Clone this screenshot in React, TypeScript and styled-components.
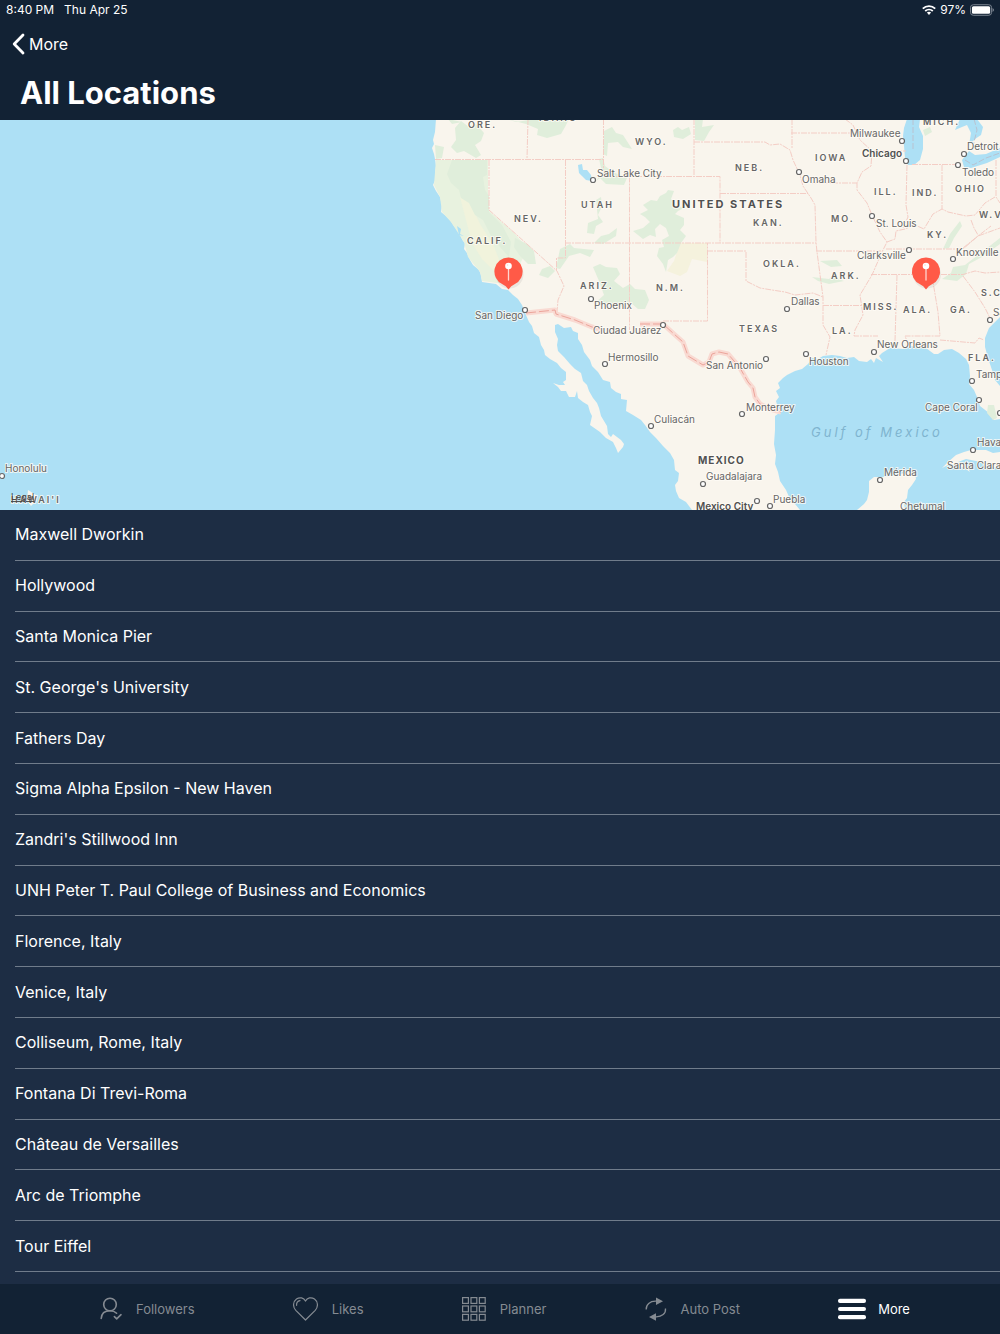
import React from "react";
import styled, { createGlobalStyle } from "styled-components";

const GlobalStyle = createGlobalStyle`
  * { box-sizing: border-box; }
  body {
    margin: 0;
    background: #1d2d44;
    color: #fff;
    font-family: Inter, "Liberation Sans", sans-serif;
  }
  button {
    margin: 0;
    padding: 0;
    border: 0;
    background: none;
    color: inherit;
    font: inherit;
    cursor: pointer;
  }
`;

const Page = styled.div`
  min-height: 100vh;
  display: flex;
  flex-direction: column;
`;

const Header = styled.header`
  background: #122234;
`;

const StatusBar = styled.div`
  height: 20px;
  padding: 0 6px;
  display: flex;
  align-items: center;
  justify-content: space-between;
  font-size: 12px;
  line-height: 20px;
`;

const StatusGroup = styled.div<{ $gap: number }>`
  display: flex;
  align-items: center;
  gap: ${(p) => p.$gap}px;
`;

const NavRow = styled.nav`
  height: 48px;
  padding: 0 12px;
  display: flex;
  align-items: center;
`;

const BackButton = styled.button`
  display: flex;
  align-items: center;
  gap: 4px;
  font-size: 16px;
  line-height: 24px;
`;

const Title = styled.h1`
  margin: 0;
  padding: 5px 20px 7px;
  font-size: 31px;
  line-height: 40px;
  font-weight: 700;
`;

const MapSection = styled.section`
  flex: none;
  height: 390px;
  background: #ade0f5;
`;

const MapSvg = styled.svg`
  display: block;
  width: 100%;
  height: 100%;
`;

type Kind = "city" | "capital" | "state" | "country" | "nation" | "sea";

const labelStyles: Record<Kind, { size: number; weight: number; space: number; color: string }> = {
  city: { size: 10, weight: 400, space: 0, color: "#666" },
  capital: { size: 10, weight: 600, space: 0, color: "#505050" },
  state: { size: 9, weight: 600, space: 2, color: "#666" },
  nation: { size: 10, weight: 700, space: 1, color: "#505050" },
  country: { size: 11, weight: 700, space: 2, color: "#505050" },
  sea: { size: 13, weight: 400, space: 3, color: "#7fb4cf" },
};

const MapLabel = styled.text<{ $kind: Kind }>`
  font-size: ${(p) => labelStyles[p.$kind].size}px;
  font-weight: ${(p) => labelStyles[p.$kind].weight};
  letter-spacing: ${(p) => labelStyles[p.$kind].space}px;
  font-style: ${(p) => (p.$kind === "sea" ? "italic" : "normal")};
  fill: ${(p) => labelStyles[p.$kind].color};
  stroke: ${(p) => (p.$kind === "sea" ? "none" : "rgba(255, 252, 246, 0.8)")};
  stroke-width: 2px;
  stroke-linejoin: round;
  paint-order: stroke;
`;

const LegalLabel = styled.text`
  font-size: 9px;
  fill: #444;
  text-decoration: underline;
`;

const List = styled.ul`
  flex: 1;
  margin: 0;
  padding: 0 0 12px 15px;
  list-style: none;
  display: flex;
  flex-direction: column;
  background: #1d2d44;
`;

const Row = styled.li`
  flex: 1;
  min-height: 44px;
  display: flex;
  border-bottom: 1px solid #707c8b;
`;

const RowButton = styled.button`
  flex: 1;
  padding-bottom: 1px;
  text-align: left;
  font-size: 16px;
  line-height: 24px;
`;

const TabBar = styled.nav`
  height: 50px;
  flex: none;
  padding: 0 9% 0 10%;
  display: flex;
  align-items: center;
  justify-content: space-between;
  background: #122234;
`;

const Tab = styled.button<{ $active?: boolean }>`
  height: 50px;
  display: flex;
  align-items: center;
  gap: ${(p) => (p.$active ? 12 : 14)}px;
  font-size: 13px;
  line-height: 20px;
  color: ${(p) => (p.$active ? "#fff" : "#858b92")};
`;

const places = [
  "Maxwell Dworkin",
  "Hollywood",
  "Santa Monica Pier",
  "St. George's University",
  "Fathers Day",
  "Sigma Alpha Epsilon - New Haven",
  "Zandri's Stillwood Inn",
  "UNH Peter T. Paul College of Business and Economics",
  "Florence, Italy",
  "Venice, Italy",
  "Colliseum, Rome, Italy",
  "Fontana Di Trevi-Roma",
  "Château de Versailles",
  "Arc de Triomphe",
  "Tour Eiffel",
];

const labels: [string, number, number, Kind][] = [
  ["ORE.", 468, 128, "state"],
  ["IDAHO", 539, 121, "state"],
  ["WYO.", 635, 145, "state"],
  ["NEB.", 735, 171, "state"],
  ["IOWA", 815, 161, "state"],
  ["MICH.", 923, 125, "state"],
  ["ILL.", 874, 195, "state"],
  ["IND.", 912, 196, "state"],
  ["OHIO", 955, 192, "state"],
  ["W.VA.", 979, 218, "state"],
  ["UTAH", 581, 208, "state"],
  ["NEV.", 514, 222, "state"],
  ["CALIF.", 467, 244, "state"],
  ["KAN.", 753, 226, "state"],
  ["MO.", 831, 222, "state"],
  ["KY.", 927, 238, "state"],
  ["OKLA.", 763, 267, "state"],
  ["ARK.", 831, 279, "state"],
  ["ARIZ.", 580, 289, "state"],
  ["N.M.", 656, 291, "state"],
  ["MISS.", 863, 310, "state"],
  ["ALA.", 903, 313, "state"],
  ["GA.", 950, 313, "state"],
  ["S.C.", 981, 296, "state"],
  ["TEXAS", 739, 332, "state"],
  ["LA.", 832, 334, "state"],
  ["FLA.", 968, 361, "state"],
  ["HAWAI'I", 11, 503, "state"],
  ["UNITED STATES", 672, 208, "country"],
  ["MEXICO", 698, 464, "nation"],
  ["Gulf of Mexico", 811, 437, "sea"],
  ["Chicago", 862, 157, "capital"],
  ["Mexico City", 696, 510, "capital"],
  ["Milwaukee", 850, 137, "city"],
  ["Detroit", 967, 150, "city"],
  ["Toledo", 962, 176, "city"],
  ["Omaha", 802, 183, "city"],
  ["Salt Lake City", 597, 177, "city"],
  ["St. Louis", 876, 227, "city"],
  ["Clarksville", 857, 259, "city"],
  ["Knoxville", 956, 256, "city"],
  ["Phoenix", 594, 309, "city"],
  ["Dallas", 791, 305, "city"],
  ["San Diego", 475, 319, "city"],
  ["Ciudad Juárez", 593, 334, "city"],
  ["Hermosillo", 608, 361, "city"],
  ["San Antonio", 706, 369, "city"],
  ["Houston", 809, 365, "city"],
  ["New Orleans", 877, 348, "city"],
  ["Savannah", 993, 316, "city"],
  ["Tampa", 976, 378, "city"],
  ["Cape Coral", 925, 411, "city"],
  ["Monterrey", 746, 411, "city"],
  ["Culiacán", 654, 423, "city"],
  ["Guadalajara", 706, 480, "city"],
  ["Puebla", 773, 503, "city"],
  ["Mérida", 884, 476, "city"],
  ["Chetumal", 900, 510, "city"],
  ["Havana", 977, 446, "city"],
  ["Santa Clara", 947, 469, "city"],
  ["Honolulu", 5, 472, "city"],
];

const dots: [number, number][] = [
  [902, 141], [906, 161], [964, 154], [958, 165], [799, 172], [593, 180], [872, 216],
  [909, 250], [953, 259], [591, 299], [787, 309], [525, 310], [663, 325], [605, 364],
  [766, 359], [806, 354], [874, 352], [990, 320], [972, 381], [979, 400], [742, 414],
  [651, 426], [703, 484], [757, 501], [770, 506], [880, 480], [973, 450], [2, 476], [1000, 413],
];

const land =
  "M436 119L435 132L433 140L434 144L432 148L434 154L435 159L436 166L435 174L436 178L433 185L436 191L440 197L442 205L441 212L446 216L450 220L454 226L457 229L459 226L460 232L464 235L461 237L463 241L465 243L464 249L467 253L470 260L473 265L479 270L481 275L482 282L489 283L496 284L502 289L508 290L513 295L518 299L522 305L524 310L526 315L529 322L532 326L534 333L539 337L541 345L544 350L545 355L550 359L557 363L561 368L566 372L566 380L563 382L565 385L559 385L553 383L558 387L561 391L566 391L569 397L575 397L577 391L578 398L583 402L588 405L590 412L592 416L590 425L600 432L606 438L613 442L616 448L618 453L623 447L624 444L621 440L613 434L611 437L608 434L607 426L604 421L601 416L599 408L597 403L593 398L589 391L587 385L583 381L581 373L575 369L570 364L564 357L558 351L557 345L558 339L555 332L555 325L558 324L564 328L571 327L573 331L578 333L578 339L582 345L584 352L590 360L592 366L598 372L603 380L610 382L611 388L616 392L621 394L621 399L627 400L626 411L633 415L641 420L645 425L650 432L656 438L663 446L670 453L674 460L675 470L679 473L678 481L675 485L676 491L679 498L686 502L692 510L800 510L795 504L790 499L786 490L780 481L778 472L775 464L776 455L774 444L775 430L775 416L782 411L778 408L776 401L779 397L776 391L780 388L778 383L783 378L787 375L795 371L802 369L808 364L812 358L818 359L823 356L832 355L840 356L847 358L854 357L859 361L867 362L871 359L874 363L876 358L883 362L879 356L882 353L890 348L903 349L911 346L920 348L926 348L934 354L938 354L944 350L952 349L959 353L966 359L969 365L970 376L969 384L974 390L977 397L980 406L989 413L994 420L1000 419V386L995 380L992 370L988 358L985 347L985 338L989 328L1000 317V119Z";

const greens = [
  "M455 128L461 121L469 127L476 124L484 133L481 141L475 145L481 155L476 158L464 151L457 153L451 147L456 140Z",
  "M507 119L516 122L535 119L546 121L569 119L565 127L561 134L547 138L537 135L538 129L526 124Z",
  "M452 160L487 160V175L483 177L485 190L489 196V212L502 225L511 242L509 257L500 247L491 236L483 220L475 215L469 203L461 198L459 190L451 183L447 174Z",
  "M448 119L462 122L452 124ZM435 145L444 147L442 158L436 159Z",
  "M515 238L527 244L534 251L536 264L528 264L520 256L514 247ZM542 269L550 266L555 271L548 278L539 275Z",
  "M604 131L612 127L616 133L623 135L632 149L623 147L618 142L608 143L607 156L603 154ZM599 159L603 158L605 166L613 172L627 178L624 185L606 184L600 178L596 181L602 172Z",
  "M673 130L678 127L682 130L689 127L691 134L683 139L674 137ZM695 119H703L702 127L714 125L709 132L704 141L695 140Z",
  "M643 205L651 200L657 201L660 196L666 193L668 190L674 191L671 199L676 205L684 208L678 211L675 214L684 218L684 225L680 230L686 236L681 243L677 253L673 257L668 260L666 272L663 264L657 256L659 248L664 247L662 240L669 236L666 228L660 224L655 229L656 237L650 235L643 239L633 231L643 228L650 222L645 217L640 214L648 210Z",
  "M560 249L570 244L574 248L594 250L590 257L580 253L569 256L560 269L556 268ZM594 243L601 236L609 234L617 228L616 236L603 244ZM596 200L601 197L602 206L598 215L603 222L596 226L594 234L587 233L588 223L598 219Z",
  "M593 267L600 264L606 267L617 268L620 274L614 281L623 288L630 284L635 289L645 290L649 300L645 309L638 309L630 302L620 307L607 303L595 303L604 295L599 281Z",
  "M820 261L837 260L842 266L831 267ZM812 277L829 279L835 273L836 278L844 281L829 284L818 281Z",
  "M942 279L951 273L953 267L965 265L982 252L1000 238V244L982 257L969 264L966 274L957 281ZM943 249L950 234L960 221L962 226L954 238L949 248Z",
  "M988 405H994L997 418L993 420L987 413ZM923 130L930 127L932 132L925 136Z",
];

const borders =
  "M435 159.5H603.500M528 119L527 159M489 160V210L557 271L564 286L558 300L557 312M565.500 160V258H556.500V271M603.500 119V176.500H720V243M694 119V176.500M629.500 176.500V330M565 243H816M720 193.500H808M694 142H765L770 145L780 144L790 150L793 160L800 175L803 186L811 198L815 205L816 242L817 252L823 297V325L830 337L826 355M792 119V149M791 133H859M663 321H707.500V243M707 251H746V281L760 288L772 290L785 292L795 295L813 293L823 297M845 119L853 125L860 140L872 151L871 166L862 172L857 183V190L867 203L872 215L880 232L887 242L882 252L872 275L860 295L863 315L855 330L854 336H878M873 151H906M812 183H857M816 251H881M823 305.500H861M886 249H963L978 236L991 226M871 274.500H963L975 271L985 273L1000 272M897 275L895 341M932 276L938 312L940 336H905L907 341M940 340L975 343L979 338L984 340M963 276L975 292L985 308L990 318M887 242L895 239L896 231L905 229L915 225L924 229L933 214L942 209L948 212L966 216L975 215L985 203L995 197M907 165L906 205L908 217L903 228M942 165V209M912 164.500H958M996 160V197L1000 203M971 220L974 228L978 235M963 248L978 236L1000 228";

const frontier =
  "M526 313L555 310L556 314L575 320L592 327L600 329M640 324H663L674 334L683 342L688 356L703 365L709 362L712 354L719 352L728 354L740 368L748 382L753 388L755 397L760 404L770 409L781 412";

function Pin({ x, y }: { x: number; y: number }) {
  return (
    <g transform={`translate(${x} ${y})`}>
      <ellipse cx="1" cy="3" rx="14" ry="14" fill="#000" opacity="0.06" />
      <path d="M0 -14A14 14 0 0 1 6 12.700Q2.500 14 0 18Q-2.500 14 -6 12.700A14 14 0 0 1 0 -14Z" fill="#ff5a47" />
      <path d="M0 -4V8.500" stroke="#ffd6d0" strokeWidth="1.300" strokeLinecap="round" />
      <circle cy="-5.500" r="3.300" fill="#fff" />
      <circle cx="-1" cy="-6.500" r="0.800" fill="#ffd6d0" />
    </g>
  );
}

function LocationMap() {
  return (
    <MapSvg viewBox="0 120 1000 390" preserveAspectRatio="xMidYMid slice" role="img" aria-label="Map of locations">
      <g fill="#f9f5ed">
        <path d={land} />
        <path d="M857 510L864 504L867 500L869 492L869 481L874 477L882 477L897 475L908 472L915 473L916 479L912 485L908 490L907 498L904 502L905 510Z" />
        <path d="M942 468L948 462L956 455L964 452L971 450L986 450L993 453L1000 452V468L985 466L981 462L966 459L958 462L967 466L970 472L963 467L950 464Z" />
        <path d="M28 490L36 495L37 500L31 506L27 500Z" />
      </g>
      <path d="M436 160L488 160V210L513 232L528 248L519 266L513 282L497 283L482 281L480 272L468 257L464 242L451 222L442 212L440 197L434 185Z" fill="#e8f2df" />
      <path d="M460 197L469 200L480 224L493 244L502 267L494 271L482 259L472 243L466 220Z" fill="#f1f3dc" />
      <path d="M680 243H707V262L692 259L687 272L680 276L667 271L674 261Z" fill="#f5f2dd" />
      <g fill="#e0eedb">{greens.map((d) => <path key={d} d={d} />)}</g>
      <g fill="#ade0f5">
        <path d="M907 119L904 128L903 136L904 146L905 158L908 165L914 165L920 160L923 149L923 136L919 127L920 119Z" />
        <path d="M960 119L955 130L962 127L967 125L971 133L969 145L975 139L981 135L983 127L977 119Z" />
        <path d="M962 160L964 167L971 168L987 163L1000 157V148L986 154L975 155L969 151Z" />
        <path d="M578 165L582 164L583 170L587 170L591 175L592 181L586 180L582 176L579 173Z" />
        <path d="M457 226L461 229L460 234L464 236L459 235Z" />
      </g>
      <path d={borders} fill="none" stroke="#f4cdc5" strokeDasharray="6 1 2 1" />
      <path d="M913 119V151M974 119L977 130L973 146M965 160L973 165L986 158L1000 153" fill="none" stroke="#b9c2d0" strokeDasharray="6 2" />
      <path d={frontier} fill="none" stroke="#f9dad2" strokeWidth="5" strokeLinejoin="round" />
      <path d={frontier} fill="none" stroke="#eca59b" strokeDasharray="10 3" />
      {dots.map(([cx, cy]) => (
        <circle key={`${cx}-${cy}`} cx={cx} cy={cy} r="2.500" fill="#fff" stroke="#666" strokeWidth="1.200" />
      ))}
      {labels.map(([text, x, y, kind]) => (
        <MapLabel key={text} x={x} y={y} $kind={kind}>{text}</MapLabel>
      ))}
      <LegalLabel x={11} y={500}>Legal</LegalLabel>
      <Pin x={508.5} y={271.5} />
      <Pin x={926} y={271.5} />
    </MapSvg>
  );
}

function FollowersIcon() {
  return (
    <svg width="22" height="24" viewBox="0 0 22 24" fill="none" stroke="currentColor" strokeWidth="1.600" strokeLinecap="round" strokeLinejoin="round" aria-hidden="true">
      <circle cx="10" cy="7.500" r="6.300" />
      <path d="M1.200 21.500C1.500 16.500 5 13.800 10 13.800C12.700 13.800 15 14.600 16.600 16.200" />
      <path d="M14.400 19.600L16.700 21.800L21 17.700" />
    </svg>
  );
}

function HeartIcon() {
  return (
    <svg width="25" height="24" viewBox="0 0 25 24" fill="none" stroke="currentColor" strokeWidth="1.200" strokeLinecap="round" strokeLinejoin="round" aria-hidden="true">
      <path d="M12.500 23L2.800 13.300C-.5 9.800 0 4.500 3.500 2C6.700 -.2 10.800 .7 12.500 4.100C14.200 .7 18.300 -.2 21.500 2C25 4.500 25.500 9.800 22.200 13.300Z" />
      <path d="M3.600 8.300C3.400 5.900 4.800 4.100 7 3.700" />
    </svg>
  );
}

function GridIcon() {
  const steps = [0.6, 9, 17.4];
  return (
    <svg width="24" height="24" viewBox="0 0 24 24" fill="none" stroke="currentColor" strokeWidth="1.200" aria-hidden="true">
      {steps.map((y) => steps.map((x) => <rect key={`${x}-${y}`} x={x} y={y} width="5.800" height="5.800" />))}
    </svg>
  );
}

function RepeatIcon() {
  return (
    <svg width="22" height="24" viewBox="0 0 22 24" fill="none" stroke="currentColor" strokeWidth="1.300" aria-hidden="true">
      <path d="M1.200 12.500C.8 7.500 5 4 11 4.200M20.500 11.500C21 16.500 17 20 11 19.900" />
      <path d="M11 .5L18 4.300L11 8ZM11 16.200L4 19.900L11 23.700Z" fill="currentColor" stroke="none" />
    </svg>
  );
}

function MenuIcon() {
  return (
    <svg width="28" height="22" viewBox="0 0 28 22" fill="currentColor" aria-hidden="true">
      <rect y="0.800" width="28" height="4.200" rx="2" />
      <rect y="8.900" width="28" height="4.200" rx="2" />
      <rect y="17" width="28" height="4.200" rx="2" />
    </svg>
  );
}

export default function App() {
  return (
    <Page>
      <GlobalStyle />
      <Header>
        <StatusBar>
          <StatusGroup $gap={10}>
            <span>8:40 PM</span>
            <span>Thu Apr 25</span>
          </StatusGroup>
          <StatusGroup $gap={4}>
            <svg width="14" height="10" viewBox="0 0 14 10" fill="none" stroke="#fff" strokeWidth="1.900" aria-label="Wi-Fi">
              <path d="M.8 3.600C4.300 .3 9.700 .3 13.200 3.600M3.200 6C5.400 4.100 8.600 4.100 10.800 6" />
              <path d="M4.900 7.600Q7 6 9.100 7.600L7 9.900Z" fill="#fff" stroke="none" />
            </svg>
            <span>97%</span>
            <svg width="24" height="12" viewBox="0 0 25 12" aria-label="Battery">
              <rect x="0.500" y="0.500" width="22" height="11" rx="3" fill="none" stroke="#7f8994" />
              <rect x="2" y="2" width="19" height="8" rx="1.600" fill="#fff" />
              <path d="M23.500 4Q25 5 25 6T23.500 8Z" fill="#7f8994" />
            </svg>
          </StatusGroup>
        </StatusBar>
        <NavRow>
          <BackButton type="button">
            <svg width="13" height="22" viewBox="0 0 13 22" fill="none" stroke="#fff" strokeWidth="2.800" strokeLinecap="round" strokeLinejoin="round" aria-hidden="true">
              <path d="M11 2L2.200 11L11 20" />
            </svg>
            More
          </BackButton>
        </NavRow>
        <Title>All Locations</Title>
      </Header>
      <MapSection>
        <LocationMap />
      </MapSection>
      <List>
        {places.map((place) => (
          <Row key={place}>
            <RowButton type="button">{place}</RowButton>
          </Row>
        ))}
      </List>
      <TabBar>
        <Tab type="button"><FollowersIcon />Followers</Tab>
        <Tab type="button"><HeartIcon />Likes</Tab>
        <Tab type="button"><GridIcon />Planner</Tab>
        <Tab type="button"><RepeatIcon />Auto Post</Tab>
        <Tab type="button" $active><MenuIcon />More</Tab>
      </TabBar>
    </Page>
  );
}
